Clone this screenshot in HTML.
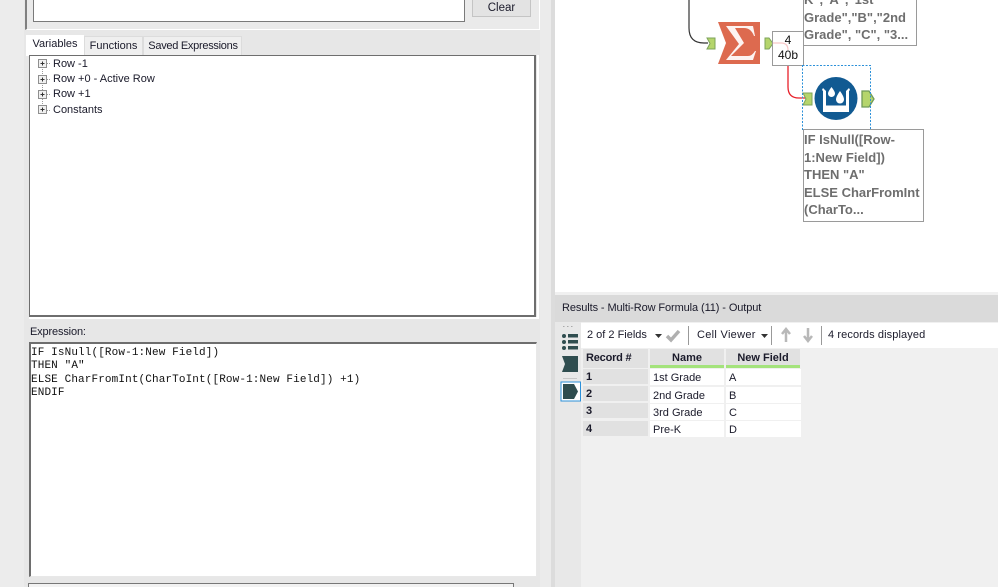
<!DOCTYPE html>
<html style="overflow:hidden;height:587px"><head><meta charset="utf-8">
<style>
html,body{margin:0;padding:0}
body{width:998px;height:587px;overflow:hidden;position:relative;background:#f0f0f0;font-family:"Liberation Sans",sans-serif;font-size:11px;color:#1a1a2a}
div{position:absolute;box-sizing:border-box;white-space:nowrap}
svg{position:absolute;left:0;top:0}
.t{line-height:14px}
.cell{background:#fff;line-height:18px;padding-left:3px;font-size:11px}
.rn{background:#e1e1e1;font-weight:bold;line-height:17px;padding-left:3px}
.hd{background:#e1e1e1;font-weight:bold;text-align:center;line-height:18px;height:19px;border-bottom:3px solid #a4e37c}
.ann{font-weight:bold;color:#6e6e6e;font-size:13px;line-height:17.5px}
</style></head><body>

<!-- left panel -->
<div style="left:0;top:0;width:24px;height:587px;background:#ececec"></div>
<div style="left:24px;top:0;width:526px;height:587px;background:#e7e7e7"></div>
<div style="left:540px;top:0;width:11px;height:587px;background:#ebebeb"></div>
<div style="left:551px;top:0;width:4px;height:587px;background:#dcdcdc"></div>
<div style="left:25px;top:0;width:515px;height:30px;background:#eaeaea;border-left:2px solid #808080;border-bottom:1px solid #fff;border-right:1px solid #fff"></div>
<div style="left:33px;top:-4px;width:432px;height:26px;background:#fff;border:1px solid #7a7a7a"></div>
<div style="left:472px;top:-6px;width:59px;height:23px;background:#e3e3e3;border:1px solid #c4c4c4;text-align:center;line-height:26px;font-size:11.5px;color:#1a1a2a">Clear</div>

<!-- tabs -->
<div style="left:26px;top:35px;width:58px;height:21px;background:#fff;text-align:center;line-height:18px">Variables</div>
<div style="left:84px;top:36px;width:59px;height:19px;background:#efefef;border:1px solid #dcdcdc;border-bottom:none;text-align:center;line-height:18px">Functions</div>
<div style="left:143px;top:36px;width:99px;height:19px;background:#efefef;border:1px solid #dcdcdc;border-bottom:none;text-align:center;line-height:18px;letter-spacing:-.28px;padding-left:1px">Saved Expressions</div>

<!-- tree -->
<div style="left:29px;top:55px;width:510px;height:264px;border:1px solid #fff;border-width:0 2px 2px 0"></div>
<div style="left:29px;top:55px;width:507px;height:262px;background:#fff;border:1px solid #6e6e6e;border-width:1px 2px 2px 1px"></div>
<svg width="120" height="120" style="left:0;top:0">
<path d="M42.5 67V110M47 63.5h4M47 79.5h4M47 94.5h4M47 110.5h4" stroke="#9a9a9a" stroke-dasharray="1 1" fill="none"/>
<g fill="#f0f0f0" stroke="#8f8f8f"><rect x="38.5" y="59.500" width="8" height="8"/><rect x="38.5" y="75.500" width="8" height="8"/><rect x="38.5" y="90.500" width="8" height="8"/><rect x="38.5" y="105.500" width="8" height="8"/></g>
<path d="M40.5 63.500h4M42.5 61.500v4M40.5 79.500h4M42.5 77.500v4M40.5 94.500h4M42.5 92.500v4M40.5 109.500h4M42.5 107.500v4" stroke="#333"/>
</svg>
<div class="t" style="left:53px;top:57px">Row -1</div>
<div class="t" style="left:53px;top:72px">Row +0 - Active Row</div>
<div class="t" style="left:53px;top:87px">Row +1</div>
<div class="t" style="left:53px;top:103px">Constants</div>

<!-- expression -->
<div class="t" style="left:30px;top:325px;letter-spacing:-.15px">Expression:</div>
<div style="left:29px;top:342px;width:508px;height:235px;background:#fff;border:2px solid #6e6e6e;border-right:1px solid #e8e8e8;border-bottom:1px solid #e8e8e8"></div>
<div style="left:31px;top:347px;font-family:'Liberation Mono',monospace;font-size:11px;letter-spacing:.12px;line-height:13.4px;white-space:pre;color:#111">IF IsNull([Row-1:New Field])
THEN "A"
ELSE CharFromInt(CharToInt([Row-1:New Field]) +1)
ENDIF</div>
<div style="left:28px;top:583px;width:486px;height:4px;background:#f2f2f2;border:1px solid #777;border-bottom:none"></div>

<!-- canvas -->
<div style="left:555px;top:0;width:443px;height:292px;background:#fff"></div>
<svg width="998" height="292">
<path d="M689 0V28Q689 43 704 43H708" fill="none" stroke="#333" stroke-width="1.2"/>
<path d="M707 38h8v11h-8l3-5.500z" fill="#b5d56c" stroke="#7da35a"/>
<path d="M718 22h42v42h-42l8-21z" fill="#dd6a4f"/>
<path d="M726 26H753L755 36H754Q751 28 744 28H735L744 43L731 56H748Q752 56 755 51H756L753 60H726L739 44Z" fill="#fff" opacity=".92"/>
<path d="M765 38h4l4 5.500-4 5.500h-4z" fill="#b5d56c" stroke="#7da35a"/>
<rect x="772.500" y="31.500" width="31" height="34" fill="#fff" stroke="#9a9a9a"/>
<path d="M773 43h8q7 0 7 7" fill="none" stroke="#f8c8c8" stroke-width="1.2"/>
<path d="M788 66V87Q788 98 799 98H806" fill="none" stroke="#e8212a" stroke-width="1.300"/>
<path d="M803 93h9v12h-9l3-6z" fill="#b5d56c" stroke="#7da35a"/>
<path d="M862 91h7l5 8-5 8h-7z" fill="#b5d56c" stroke="#6f9a58" stroke-width="1.300"/>
<circle cx="836" cy="98.500" r="21.500" fill="#115a92"/>
<path d="M823 88l3 3v14.500h20V91l3-3l1 2-1 1v21h-26v-21l-1-1z" fill="#fff"/>
<path d="M831.500 87q3.500 4.500 3.500 6.500a3.500 3.500 0 0 1-7 0q0-2 3.500-6.500zM840 91q4 5.500 4 8.500a4 4 0 0 1-8 0q0-3 4-8.500z" fill="#fff"/>
<rect x="802.500" y="65.500" width="68" height="64" fill="none" stroke="#2b90d9" stroke-dasharray="2 1.500"/>
</svg>
<div style="left:773px;top:33px;width:30px;text-align:center;font-size:12px;line-height:15px;color:#111">4<br>40b</div>
<div style="left:803px;top:-10px;width:114px;height:56px;border:1px solid #9a9a9a;background:#fff"></div>
<div class="ann" style="left:804px;top:-9px">K","A","1st<br>Grade","B","2nd<br>Grade", "C", "3...</div>
<div style="left:803px;top:129px;width:121px;height:93px;border:1px solid #9a9a9a;background:#fff"></div>
<div class="ann" style="left:804px;top:131px">IF IsNull([Row-<br>1:New Field])<br>THEN "A"<br>ELSE CharFromInt<br>(CharTo...</div>

<!-- results -->
<div style="left:555px;top:292px;width:443px;height:295px;background:#f0f0f0"></div>
<div style="left:555px;top:295px;width:443px;height:27px;background:#dadada"></div>
<div class="t" style="left:562px;top:301px;letter-spacing:-.1px">Results - Multi-Row Formula (11) - Output</div>
<div style="left:555px;top:322px;width:26px;height:265px;background:#e8e8e8"></div>
<div style="left:581px;top:323px;width:417px;height:25px;background:#fff"></div>
<svg width="998" height="587" style="pointer-events:none">
<path d="M563 326.500h1.500M567 326.500h1.500M571 326.500h1.500" stroke="#aaa"/>
<g fill="#2f4d4f"><circle cx="564" cy="336" r="2"/><circle cx="564" cy="342" r="2"/><circle cx="564" cy="348" r="2"/><rect x="568" y="334" width="10" height="3.500"/><rect x="568" y="340" width="10" height="3.500"/><rect x="568" y="346" width="10" height="3.500"/></g>
<path d="M562 356h16v16h-16l3-8z" fill="#2f4d4f"/>
<path d="M563 378.500h14" stroke="#c8c8c8"/>
<rect x="561" y="382" width="19.500" height="19" fill="#fff" stroke="#2b90d9" stroke-width="1"/>
<path d="M563 384h11l4 7.500-4 7.500h-11z" fill="#2f4d4f"/>
<path d="M655 334h7l-3.500 4z" fill="#333"/>
<path d="M667 336l4 4 8-9" fill="none" stroke="#b0b0b0" stroke-width="3.500"/>
<path d="M688.500 326v19M771.500 326v19M821.500 326v19" stroke="#999"/>
<path d="M761 334h7l-3.500 4z" fill="#333"/>
<path d="M786 342v-12M782 334l4-5 4 5" fill="none" stroke="#b8b8b8" stroke-width="2.500"/>
<path d="M808 328v12M804 336l4 5 4-5" fill="none" stroke="#b8b8b8" stroke-width="2.500"/>
</svg>
<div class="t" style="left:587px;top:328px">2 of 2 Fields</div>
<div class="t" style="left:697px;top:328px;letter-spacing:.3px">Cell Viewer</div>
<div class="t" style="left:828px;top:328px;letter-spacing:.1px">4 records displayed</div>

<div class="hd" style="left:583px;top:349px;width:65px;text-align:left;padding-left:3px;border-bottom:none;height:19px;letter-spacing:-.2px">Record #</div>
<div class="hd" style="left:650px;top:349px;width:74px">Name</div>
<div class="hd" style="left:726px;top:349px;width:74px">New Field</div>

<div class="rn" style="left:583px;top:369px;width:65px;height:15px">1</div>
<div class="rn" style="left:583px;top:386px;width:65px;height:15px">2</div>
<div class="rn" style="left:583px;top:403px;width:65px;height:15px">3</div>
<div class="rn" style="left:583px;top:421px;width:65px;height:15px">4</div>
<div class="cell" style="left:650px;top:369px;width:74px;height:16px">1st Grade</div>
<div class="cell" style="left:650px;top:387px;width:74px;height:16px">2nd Grade</div>
<div class="cell" style="left:650px;top:404px;width:74px;height:16px">3rd Grade</div>
<div class="cell" style="left:650px;top:421px;width:74px;height:16px">Pre-K</div>
<div class="cell" style="left:726px;top:369px;width:75px;height:16px">A</div>
<div class="cell" style="left:726px;top:387px;width:75px;height:16px">B</div>
<div class="cell" style="left:726px;top:404px;width:75px;height:16px">C</div>
<div class="cell" style="left:726px;top:421px;width:75px;height:16px">D</div>
</body></html>
